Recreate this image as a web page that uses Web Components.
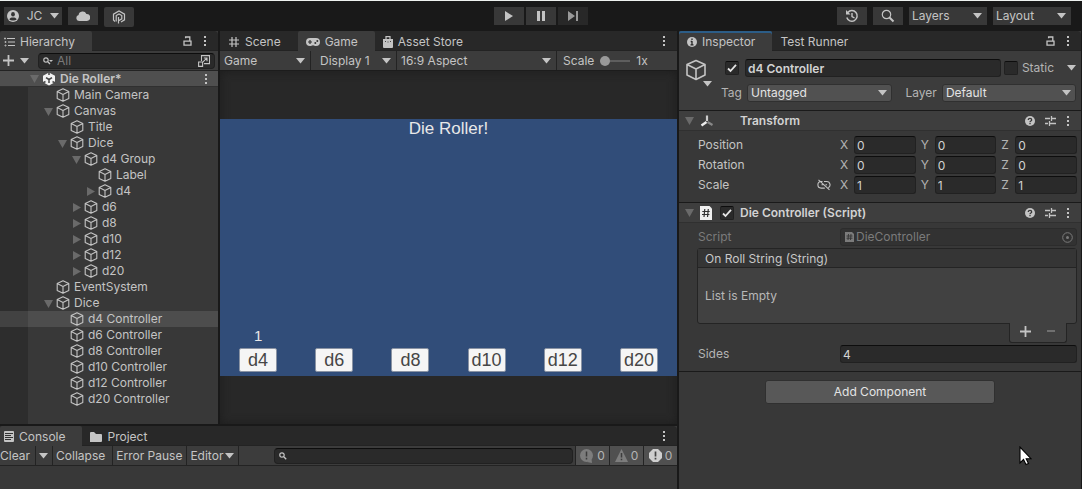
<!DOCTYPE html>
<html lang="en">
<head>
<meta charset="utf-8">
<title>Die Roller - Editor</title>
<style>
html, body { margin: 0; min-height: 100%; background: #191919; }
body { font: 12px/16px Inter, "Liberation Sans", sans-serif; color: #c4c4c4; }
</style>
</head>
<body>
<editor-app></editor-app>
<script>
const ICONS = {
  down: [9, 6, '<path d="M0 0h9L4.500 5.500z" fill="currentColor"/>'],
  foldOpen: [9, 9, '<path d="M0 1h9L4.500 9z" fill="currentColor"/>'],
  foldShut: [9, 9, '<path d="M1 0v9l8-4.500z" fill="currentColor"/>'],
  cube: [14, 14, '<path d="M7 .8 12.800 3.600v6.800L7 13.300 1.200 10.400V3.600zM1.200 3.600 7 6.400l5.800-2.800M7 6.400v6.800" fill="none" stroke="currentColor" stroke-width="1.100" stroke-linejoin="round"/>'],
  cubeBig: [22, 22, '<path d="M11 1.500 20 5.500v10.500L11 20.500 2 16V5.500zM2 5.500l9 4.500 9-4.500M11 10v10.500" fill="none" stroke="currentColor" stroke-width="1.600" stroke-linejoin="round"/>'],
  unity: [14, 14, '<path d="M7 .5 13 3.800v6.400L7 13.500 1 10.200V3.800z" fill="#f2f2f2"/><path d="M7 7.500V11M7 7.500 4 5.700M7 7.500l3-1.800" stroke="#444" stroke-width="1.500"/><path d="M7 0v3M.8 11 3.500 9.500M13.200 11 10.500 9.500" stroke="#4f4f4f" stroke-width="1.600"/>'],
  user: [12, 12, '<circle cx="6" cy="6" r="6" fill="currentColor"/><ellipse cx="6" cy="4.300" rx="1.900" ry="2.300" fill="#333"/><path d="M2.300 9.300C3 7.600 4.500 7.400 6 7.400s3 .2 3.700 1.900C8.700 10.400 7.400 10.600 6 10.600s-2.700-.2-3.700-1.300z" fill="#333"/>'],
  cloud: [14, 10, '<path d="M3 10a3 3 0 0 1-.4-5.900A4.100 4.100 0 0 1 10.400 3 3.500 3.500 0 0 1 11 10z" fill="currentColor"/>'],
  plastic: [14, 14, '<path d="M3 11.500 1.500 10V4.200L7 1l5.500 3.200v5.600L9 12" fill="none" stroke="currentColor" stroke-width="1.200"/><path d="M4.200 11.500V5.600L7 4l2.800 1.600v3.200L7 10.400M6.500 13.500V7" fill="none" stroke="currentColor" stroke-width="1.200"/>'],
  play: [10, 12, '<path d="M1 1v10l8-5z" fill="currentColor"/>'],
  pause: [10, 12, '<path d="M1 1h3v10H1zM6 1h3v10H6z" fill="currentColor"/>'],
  step: [12, 12, '<path d="M1 1v10l7-5zM9 1h2v10H9z" fill="currentColor"/>'],
  history: [14, 14, '<path d="M2.800 3.500A5.300 5.300 0 1 1 1.800 8.500" fill="none" stroke="currentColor" stroke-width="1.500"/><path d="M1 1v4.500h4.500z" fill="currentColor"/><path d="M7 4v3.500l2.500 1.500" fill="none" stroke="currentColor" stroke-width="1.400"/>'],
  search: [14, 14, '<circle cx="5.500" cy="5.500" r="4.200" fill="none" stroke="currentColor" stroke-width="1.200"/><path d="m8.500 8.500 4 4" stroke="currentColor" stroke-width="2"/>'],
  find: [8, 8, '<circle cx="3" cy="3" r="2.200" fill="none" stroke="currentColor" stroke-width="1.200"/><path d="m4.800 4.800 2.400 2.400" stroke="currentColor" stroke-width="1.400"/>'],
  findMenu: [10, 8, '<circle cx="3" cy="3" r="2.200" fill="none" stroke="currentColor" stroke-width="1.200"/><path d="m4.800 4.800 2.200 2.200" stroke="currentColor" stroke-width="1.300"/><path d="M6 3h4L8 5z" fill="currentColor"/>'],
  tree: [11, 10, '<path d="M3 1.500h8M4 5h7M4 8.500h7" stroke="currentColor" stroke-width="1.200"/><path d="M0 1.500h2M1 .5v2M1 4.500h1v1H1zM1 8h1v1H1z" stroke="currentColor" stroke-width=".8"/>'],
  lock: [9, 10, '<path d="M1 5.200h7v4H1zM2.600 2.200V1h4.200v4" fill="none" stroke="currentColor" stroke-width="1.300"/>'],
  more: [4, 12, '<path d="M1 1h2v2H1zM1 5h2v2H1zM1 9h2v2H1z" fill="currentColor"/>'],
  plus: [11, 11, '<path d="M5.500 0v11M0 5.500h11" stroke="currentColor" stroke-width="1.800"/>'],
  minus: [10, 10, '<path d="M1 5h8" stroke="currentColor" stroke-width="1.800"/>'],
  pick: [12, 12, '<path d="M3.500 6V.6h8v8H6M.6 7h4v4.400h-4zM5 6.800l3.500-3.500M5.800 3H9v3.200" fill="none" stroke="currentColor" stroke-width="1.100"/>'],
  grid: [12, 12, '<path d="M4 1v10M8 1v10M1 4h10M1 8h10" stroke="currentColor" stroke-width="1.200"/>'],
  pad: [14, 8, '<path d="M4 0h6a4 4 0 0 1 0 8c-1.200 0-1.800-.8-3-.8S5.200 8 4 8a4 4 0 0 1 0-8z" fill="currentColor"/><path d="M2 4h4M4 2v4" stroke="#333" stroke-width="1.200"/><circle cx="9.300" cy="5" r="1" fill="#333"/><circle cx="11.300" cy="3" r="1" fill="#333"/>'],
  bag: [10, 12, '<path d="M0 3h10v8a1 1 0 0 1-1 1H1a1 1 0 0 1-1-1z" fill="currentColor"/><path d="M3 3.500V.7h4v2.800" fill="none" stroke="currentColor" stroke-width="1.200"/><path d="M2 5.500h1M4.500 6h1M7 5.500h1" stroke="#444"/>'],
  info: [10, 10, '<circle cx="5" cy="5" r="5" fill="currentColor"/><path d="M5 1.500v1.600M5 4v4M3.700 4.500H5M3.500 7.800h3" stroke="#282828" stroke-width="1.300"/>'],
  console: [10, 11, '<rect width="10" height="11" rx="1" fill="currentColor"/><path d="M1 2.500h8M1 4.500h6M1 6.500h8M1 8.500h6" stroke="#333" stroke-width="1"/>'],
  folder: [12, 10, '<path d="M0 1q0-1 1-1h3l2 2h5q1 0 1 1v6q0 1-1 1H0z" fill="currentColor"/>'],
  axes: [14, 14, '<path d="M7 7V1.500" stroke="#ccc" stroke-width="2.200"/><path d="m6.500 8-5 3.500" stroke="#eee" stroke-width="2.400"/><path d="m7.500 8 5 3" stroke="#888" stroke-width="2.200"/>'],
  help: [10, 10, '<circle cx="5" cy="5" r="5" fill="currentColor"/><path d="M3.300 4c0-2.200 3.400-2 3.400-.1C6.700 5 5 5 5 6.200M5 7v1.300" fill="none" stroke="#383838" stroke-width="1.300"/>'],
  sliders: [11, 10, '<path d="M0 2.500h5M7 2.500h4M6.500 0v5M0 7.500h3M5 7.500h6M4.500 5v5" stroke="currentColor" stroke-width="1.300"/>'],
  check: [10, 10, '<path d="m1 5.500 2.500 2.500L9 1.800" fill="none" stroke="#e4e4e4" stroke-width="1.800"/>'],
  script: [12, 14, '<path d="M0 0h9.500L12 2.500V14H0z" fill="#f0f0f0"/><path d="M4.800 3 4 11M8.300 3l-.8 8M2.300 5.500h7.400M2 8.500h7.400" stroke="#333" stroke-width="1.200"/>'],
  scriptSmall: [9, 10, '<path d="M0 0h7l2 2v8H0z" fill="currentColor"/><path d="M3.500 2 3 8M6 2l-.5 6M1.500 4h6M1.500 6.200h6" stroke="#333" stroke-width=".9"/>'],
  unlink: [14, 12, '<path d="M5.500 2.500H4.200a3.300 3.300 0 0 0 0 6.600h3.600M7 2.500h2.800a3.300 3.300 0 0 1 1.500 6.200M4.500 5.800h1.800M8.500 5.800h1.500M1.500.8l11 10" fill="none" stroke="currentColor" stroke-width="1.100"/>'],
  target: [11, 11, '<circle cx="5.500" cy="5.500" r="4.800" fill="none" stroke="currentColor"/><circle cx="5.500" cy="5.500" r="1.500" fill="currentColor"/>'],
  bubble: [14, 14, '<circle cx="6.500" cy="6.500" r="6.500" fill="currentColor"/><path d="M7 13l5 1-.5-4z" fill="currentColor"/><path d="M6.500 2.500v5M6.500 8.800v1.700" stroke="#3c3c3c" stroke-width="1.500"/>'],
  warn: [13, 13, '<path d="M6.500 0 13 13H0z" fill="currentColor"/><path d="M6.500 4v4.500M6.500 9.800v1.500" stroke="#3c3c3c" stroke-width="1.500"/>'],
  error: [13, 13, '<path d="M4 0h5l4 4v5l-4 4H4L0 9V4z" fill="currentColor"/><path d="M6.500 2.500v5M6.500 8.800v1.700" stroke="#444" stroke-width="1.700"/>'],
  pointer: [13, 20, '<path d="M1 1v16l3.500-3.500L7 18.500l2.500-1-2.300-4.800H12z" fill="#fff" stroke="#000" stroke-width="1.100"/>']
};

const RESET = `
  :host { display: block; box-sizing: border-box; }
  *, *::before { box-sizing: border-box; }
  button { font: inherit; color: inherit; background: none; border: 0; padding: 0; margin: 0; display: flex; align-items: center; justify-content: center; }
  input, select { font: inherit; color: inherit; margin: 0; min-width: 0; outline: 0; }
`;

function define(name, view) {
  customElements.define(name, class extends HTMLElement {
    connectedCallback() {
      if (this.shadowRoot) return;
      const at = key => this.getAttribute(key) || '';
      this.attachShadow({ mode: 'open' }).innerHTML = `<style>${RESET}</style>` + view(at);
    }
  });
}

define('ui-icon', at => {
  const [w, h, body] = ICONS[at('name')];
  return `<style>:host { display: block; flex: none; line-height: 0; }</style>
    <svg width="${w}" height="${h}" viewBox="0 0 ${w} ${h}" aria-hidden="true">${body}</svg>`;
});

/* Dark toolbar push button. */
define('tool-button', at => `
  <style>
    button { height: 18px; width: 30px; background: #383838; gap: 8px; }
    :host([wide]) button { width: 58px; }
    :host([dim]) button { background: #282828; color: #999; }
    :host([tall]) button { height: 20px; border-radius: 2px; }
  </style>
  <button aria-label="${at('label')}"><slot></slot></button>`);

/* Drop-down; the arrow shares the select's grid cell. */
define('ui-select', at => `
  <style>
    :host { min-width: 0; }
    .row { display: flex; align-items: center; gap: 5px; height: 100%; }
    .box { display: grid; flex: 1; align-items: center; min-width: 0; height: 100%; }
    select, ui-icon { grid-area: 1 / 1; }
    ui-icon { justify-self: end; margin-right: 5px; pointer-events: none; }
    select { appearance: none; width: 100%; height: 18px; border: 0; border-radius: 0; padding: 0 16px 0 3px; background: #383838; }
    :host([flat]) select { background: transparent; height: 20px; padding-left: 4px; }
    :host([raised]) select { background: #515151; border: 1px solid #303030; border-radius: 3px; color: #e4e4e4; }
    label { color: #b4b4b4; }
  </style>
  <div class="row">
    ${at('label') ? `<label for="s">${at('label')}</label>` : ''}
    <div class="box"><select id="s" aria-label="${at('label') || at('name')}"><option>${at('value')}</option></select><ui-icon name="down"></ui-icon></div>
  </div>`);

define('ui-check', at => `
  <style>
    label { display: flex; align-items: center; gap: 4px; }
    .box { display: grid; place-items: center; }
    input, ui-icon { grid-area: 1 / 1; }
    input { appearance: none; width: 14px; height: 14px; background: #2a2a2a; border: 1px solid #212121; border-top-color: #0d0d0d; border-radius: 2px; }
    ui-icon { visibility: hidden; pointer-events: none; }
    input:checked + ui-icon { visibility: visible; }
    .name { color: #b4b4b4; }
  </style>
  <label><span class="box"><input type="checkbox" aria-label="${at('name')}" ${at('on') ? 'checked' : ''}><ui-icon name="check"></ui-icon></span>${at('label') ? `<span class="name">${at('label')}</span>` : ''}</label>`);

/* Text field with an optional leading label. */
define('ui-field', at => `
  <style>
    label { display: flex; align-items: center; gap: 6px; }
    label span { width: 8px; color: #b4b4b4; }
    :host([form]) label { display: grid; grid-template-columns: 142fr 237fr; gap: 0; }
    :host([form]) label span { width: auto; }
    input { flex: 1; width: 100%; height: 18px; padding: 0 2px; background: #2a2a2a; border: 1px solid #212121; border-top-color: #0d0d0d; border-radius: 3px; color: #d2d2d2; }
    :host([bold]) input { font-weight: 600; }
  </style>
  <label>${at('label') ? `<span>${at('label')}</span>` : ''}<input aria-label="${at('label') || at('name')}" value="${at('value')}"></label>`);

define('ui-tab', at => `
  <style>
    :host { flex: none; }
    button { height: 20px; padding: 1px 17px 0 8px; gap: 5px; }
    :host([active]) button { background: #3c3c3c; border-radius: 2px 2px 0 0; }
    :host([focused]) button { box-shadow: inset 0 2px #2c5d87; }
    :host([flush]) button { padding-left: 4px; }
  </style>
  <button role="tab" aria-selected="${at('active') === 'true'}">${at('icon') ? `<ui-icon name="${at('icon')}"></ui-icon>` : ''}<slot></slot></button>`);

define('tab-strip', at => `
  <style>
    :host { background: #282828; border-radius: 0 4px 0 0; border-bottom: 1px solid #232323; }
    .row { display: flex; height: 19px; align-items: flex-start; }
    .tabs { display: flex; flex: 1; min-width: 0; }
    .end { display: flex; align-items: center; height: 19px; gap: 11px; padding-right: 11px; }
    .end button { height: 18px; }
  </style>
  <div class="row"><div class="tabs" role="tablist"><slot></slot></div>
    <div class="end">${at('lock') ? '<button aria-label="Lock"><ui-icon name="lock"></ui-icon></button>' : ''}<button aria-label="Menu"><ui-icon name="more"></ui-icon></button></div></div>`);

define('tree-item', at => {
  const fold = at('fold');
  return `
  <style>
    .row { display: flex; height: 16px; align-items: center; }
    .gutter { width: 28px; height: 16px; flex: none; background: #2d2d2d; }
    .indent { width: ${Number(at('level')) * 14}px; flex: none; }
    .fold { width: 14px; flex: none; padding-left: 2px; color: #6a6a6a; }
    .name { margin-left: 4px; flex: 1; }
    :host([selected]) .row { background: #4d4d4d; }
    :host([selected]) .gutter { background: #424242; }
    :host([scene]) .row { background: #4f4f4f; border-bottom: 1px solid #303030; font-weight: 600; }
    :host([scene]) .gutter { background: none; }
    .more { margin-right: 10px; }
  </style>
  <div class="row" role="treeitem" aria-level="${Number(at('level')) + 1}">
    <span class="gutter"></span><span class="indent"></span>
    <span class="fold">${fold ? `<ui-icon name="${fold === 'open' ? 'foldOpen' : 'foldShut'}"></ui-icon>` : ''}</span>
    <ui-icon name="${at('icon') || 'cube'}"></ui-icon><span class="name"><slot></slot></span>
    ${at('icon') ? '<button class="more" aria-label="Scene menu"><ui-icon name="more"></ui-icon></button>' : ''}
  </div>`;
});

define('hierarchy-panel', () => {
  const rows = [
    [1, '', 'Main Camera'], [1, 'open', 'Canvas'], [2, '', 'Title'], [2, 'open', 'Dice'],
    [3, 'open', 'd4 Group'], [4, '', 'Label'], [4, 'shut', 'd4'],
    [3, 'shut', 'd6'], [3, 'shut', 'd8'], [3, 'shut', 'd10'], [3, 'shut', 'd12'], [3, 'shut', 'd20'],
    [1, '', 'EventSystem'], [1, 'open', 'Dice'],
    [2, '', 'd4 Controller', 'selected'], [2, '', 'd6 Controller'], [2, '', 'd8 Controller'],
    [2, '', 'd10 Controller'], [2, '', 'd12 Controller'], [2, '', 'd20 Controller']
  ];
  return `
  <style>
    :host { display: flex; flex-direction: column; background: #383838; min-width: 0; }
    .bar { display: flex; align-items: center; height: 20px; background: #3c3c3c; border-bottom: 1px solid #232323; padding: 0 3px; gap: 9px; }
    .add { gap: 6px; }
    .search { flex: 1; min-width: 0; display: flex; align-items: center; height: 16px; padding: 0 4px; gap: 4px; background: #2a2a2a; border: 1px solid #212121; border-top-color: #0d0d0d; border-radius: 4px; }
    input { flex: 1; width: 100%; height: 14px; padding: 0; background: none; border: 0; }
    input::placeholder { color: #7a7a7a; opacity: 1; }
    .tree { flex: 1; background: linear-gradient(90deg, #2d2d2d 28px, #383838 28px); }
  </style>
  <tab-strip lock="true"><ui-tab icon="tree" active="true" flush>Hierarchy</ui-tab></tab-strip>
  <div class="bar">
    <button class="add" aria-label="Create"><ui-icon name="plus"></ui-icon><ui-icon name="down"></ui-icon></button>
    <div class="search"><ui-icon name="findMenu"></ui-icon><input type="search" placeholder="All" aria-label="Search hierarchy"><button aria-label="Pick object"><ui-icon name="pick"></ui-icon></button></div>
  </div>
  <div class="tree" role="tree">
    <tree-item level="0" icon="unity" fold="open" scene>Die Roller*</tree-item>
    ${rows.map(([level, fold, name, state]) => `<tree-item level="${level}" fold="${fold}" ${state || ''}>${name}</tree-item>`).join('')}
  </div>`;
});

define('die-roll', at => `
  <style>
    :host { display: flex; flex-direction: column; align-items: center; gap: 2px; font: 17px/20px "Liberation Sans", sans-serif; }
    .value { height: 20px; color: #e8e8e8; font-size: 15px; }
    button { width: 38px; height: 24px; background: #f5f5f5; border: 1px solid #8a93a3; border-radius: 2px; color: #464646; font-size: 18px; }
  </style>
  <span class="value">${at('value')}</span><button><slot></slot></button>`);

define('game-panel', () => `
  <style>
    :host { display: flex; flex-direction: column; background: #282828; min-width: 0; }
    .bar { display: grid; grid-template-columns: 90fr 85fr 159fr 120fr; gap: 1px; height: 20px; background: #232323; border-bottom: 1px solid #1c1c1c; }
    .bar > * { background: #3c3c3c; height: 19px; }
    .inset { padding-left: 5px; }
    .scale { display: flex; align-items: center; gap: 6px; padding-left: 6px; }
    .scale label { display: flex; align-items: center; gap: 6px; }
    input { appearance: none; width: 30px; height: 12px; background: linear-gradient(#5e5e5e, #5e5e5e) center / 100% 2px no-repeat; }
    input::-webkit-slider-thumb { appearance: none; width: 10px; height: 10px; border-radius: 50%; background: #999; }
    .view { flex: 1; display: flex; flex-direction: column; justify-content: center; box-shadow: inset 0 0 10px #1d1d1d; }
    .stage { aspect-ratio: 16 / 9; display: flex; flex-direction: column; justify-content: space-between; background: #314d79; color: #e8e8e8; }
    h1 { margin: 0; text-align: center; font: 17px/20px "Liberation Sans", sans-serif; }
    .dice { display: grid; grid-template-columns: repeat(6, 1fr); padding-bottom: 4px; }
  </style>
  <tab-strip><ui-tab icon="grid">Scene</ui-tab><ui-tab icon="pad" active="true">Game</ui-tab><ui-tab icon="bag">Asset Store</ui-tab></tab-strip>
  <div class="bar">
    <ui-select flat name="View" value="Game"></ui-select>
    <ui-select flat class="inset" name="Display" value="Display 1"></ui-select>
    <ui-select flat name="Aspect" value="16:9 Aspect"></ui-select>
    <div class="scale"><label>Scale <input type="range" min="1" max="5" value="1"></label><span>1x</span></div>
  </div>
  <div class="view"><div class="stage">
    <h1>Die Roller!</h1>
    <div class="dice">
      <die-roll value="1">d4</die-roll><die-roll>d6</die-roll><die-roll>d8</die-roll>
      <die-roll>d10</die-roll><die-roll>d12</die-roll><die-roll>d20</die-roll>
    </div>
  </div></div>`);

define('console-panel', () => `
  <style>
    :host { display: flex; flex-direction: column; background: #383838; min-width: 0; }
    .bar { display: flex; align-items: stretch; height: 20px; background: #3c3c3c; border-bottom: 1px solid #232323; }
    .bar > button { padding: 0 4px 0 3px; border-right: 1px solid #232323; flex: none; }
    .bar > .clear { padding: 0 5px 0 0; }
    .bar > .arrow { padding: 0 4px 0 3px; }
    .bar > .wide { padding-right: 7px; }
    .bar > .menu { gap: 2px; }
    .search { flex: 1; min-width: 0; display: flex; align-items: center; height: 16px; margin: 2px 2px 0 35px; padding: 0 4px; background: #2a2a2a; border: 1px solid #212121; border-top-color: #0d0d0d; border-radius: 4px; gap: 4px; }
    input { flex: 1; height: 14px; padding: 0; background: none; border: 0; }
    .bar > .count { width: 34px; padding: 0; gap: 3px; background: #505050; border: 0; border-left: 1px solid #232323; color: #b4b4b4; }
    .count ui-icon { color: #7d7d7d; }
    .count .lit { color: #cfcfcf; }
  </style>
  <tab-strip><ui-tab icon="console" active="true" flush>Console</ui-tab><ui-tab icon="folder">Project</ui-tab></tab-strip>
  <div class="bar">
    <button class="clear">Clear</button><button class="arrow" aria-label="Clear options"><ui-icon name="down"></ui-icon></button>
    <button class="wide">Collapse</button><button>Error Pause</button>
    <button class="menu">Editor<ui-icon name="down"></ui-icon></button>
    <div class="search"><ui-icon name="find"></ui-icon><input type="search" aria-label="Search console"></div>
    <button class="count" aria-label="Messages"><ui-icon name="bubble"></ui-icon><span>0</span></button>
    <button class="count" aria-label="Warnings"><ui-icon name="warn"></ui-icon><span>0</span></button>
    <button class="count" aria-label="Errors"><ui-icon class="lit" name="error"></ui-icon><span>0</span></button>
  </div>`);

define('component-head', at => `
  <style>
    .row { display: grid; grid-template-columns: 9px 14px 14px 1fr auto; align-items: center; height: 21px; column-gap: 6px; padding: 0 11px 0 6px; background: #3e3e3e; border-top: 1px solid #1a1a1a; border-bottom: 1px solid #303030; }
    .fold { color: #6a6a6a; }
    h2 { margin: 0; font-size: 12px; line-height: 16px; font-weight: 600; color: #d2d2d2; }
    .tools { display: flex; gap: 10px; }
  </style>
  <div class="row">
    <ui-icon class="fold" name="foldOpen"></ui-icon><ui-icon name="${at('icon')}"></ui-icon>
    ${at('toggle') ? '<ui-check name="Enabled" on="true"></ui-check>' : '<span></span>'}
    <h2><slot></slot></h2>
    <div class="tools"><button aria-label="Help"><ui-icon name="help"></ui-icon></button><button aria-label="Presets"><ui-icon name="sliders"></ui-icon></button><button aria-label="Menu"><ui-icon name="more"></ui-icon></button></div>
  </div>`);

define('vector-row', at => `
  <style>
    .row { display: grid; grid-template-columns: 142fr 237fr; align-items: center; height: 18px; }
    .name { display: flex; align-items: center; justify-content: space-between; padding-right: 9px; }
    .fields { display: grid; grid-template-columns: repeat(3, 1fr); gap: 5px; }
  </style>
  <div class="row" role="group" aria-label="${at('name')}">
    <div class="name"><span>${at('name')}</span>${at('link') ? '<button aria-label="Link scale"><ui-icon name="unlink"></ui-icon></button>' : ''}</div>
    <div class="fields">${['X', 'Y', 'Z'].map(axis => `<ui-field label="${axis}" value="${at('value')}"></ui-field>`).join('')}</div>
  </div>`);

define('inspector-panel', () => `
  <style>
    :host { display: flex; flex-direction: column; background: #383838; min-width: 0; position: relative; }
    .object { display: grid; grid-template-columns: 22px 1fr; column-gap: 14px; padding: 8px 5px 8px 6px; background: #3c3c3c; min-height: 59px; }
    .thumb { display: flex; flex-direction: column; height: 28px; }
    .thumb ui-icon:last-child { align-self: flex-end; margin-right: -5px; }
    .lines { display: grid; gap: 6px; min-width: 0; }
    .name { display: flex; align-items: center; gap: 3px; padding-left: 4px; }
    .name ui-field { flex: 1; margin-left: 3px; }
    .name ui-icon { margin-left: 10px; }
    .kinds { display: grid; grid-template-columns: 1fr 1fr; gap: 14px; }
    .body { display: flex; flex-direction: column; gap: 2px; padding: 5px 4px 8px 19px; }
    .script { display: grid; grid-template-columns: 142fr 237fr; align-items: center; color: #7b7b7b; height: 18px; }
    .ref { display: flex; align-items: center; gap: 2px; height: 18px; padding: 0 3px 0 4px; border: 1px solid #2c2c2c; border-radius: 3px; background: #323232; }
    .ref span { flex: 1; }
    .list { margin-left: -1px; border: 1px solid #242424; border-radius: 3px; background: #414141; }
    .list h3 { margin: 0; padding: 0 7px; height: 19px; font-size: 12px; font-weight: 400; line-height: 20px; background: #353535; border-bottom: 1px solid #242424; color: #c8c8c8; }
    .list p { margin: 0; padding: 20px 7px; line-height: 16px; height: 55px; color: #b8b8b8; }
    .edit { align-self: flex-end; display: flex; align-items: center; justify-content: space-around; width: 58px; height: 20px; margin: -3px 10px 0 0; padding: 0 3px 3px; border: 1px solid #242424; border-top: 0; border-radius: 0 0 3px 3px; background: #414141; }
    .edit > :last-child { color: #777; }
    .foot { border-top: 1px solid #1a1a1a; padding-top: 8px; display: flex; justify-content: center; }
    .foot button { width: 57%; height: 24px; background: #585858; border: 1px solid #303030; border-radius: 3px; color: #e4e4e4; }
    .pointer { position: absolute; left: 340px; top: 415px; }
  </style>
  <tab-strip lock="true"><ui-tab icon="info" active="true" focused>Inspector</ui-tab><ui-tab>Test Runner</ui-tab></tab-strip>
  <section class="object">
    <div class="thumb"><ui-icon name="cubeBig"></ui-icon><ui-icon name="down"></ui-icon></div>
    <div class="lines">
      <div class="name"><ui-check name="Active" on="true"></ui-check><ui-field bold name="Object name" value="d4 Controller"></ui-field><ui-check label="Static" name="Static"></ui-check><ui-icon name="down"></ui-icon></div>
      <div class="kinds"><ui-select raised label="Tag" value="Untagged"></ui-select><ui-select raised label="Layer" value="Default"></ui-select></div>
    </div>
  </section>
  <component-head icon="axes">Transform</component-head>
  <div class="body">
    <vector-row name="Position" value="0"></vector-row>
    <vector-row name="Rotation" value="0"></vector-row>
    <vector-row name="Scale" value="1" link="true"></vector-row>
  </div>
  <component-head icon="script" toggle="true">Die Controller (Script)</component-head>
  <div class="body">
    <div class="script"><span>Script</span><div class="ref"><ui-icon name="scriptSmall"></ui-icon><span>DieController</span><ui-icon name="target"></ui-icon></div></div>
    <div class="list"><h3>On Roll String (String)</h3><p>List is Empty</p></div>
    <div class="edit"><button aria-label="Add"><ui-icon name="plus"></ui-icon></button><button aria-label="Remove"><ui-icon name="minus"></ui-icon></button></div>
    <ui-field form label="Sides" value="4"></ui-field>
  </div>
  <div class="foot"><button>Add Component</button></div>
  <ui-icon class="pointer" name="pointer"></ui-icon>`);

define('top-bar', () => `
  <style>
    :host { border-top: 1px solid #eef2f0; }
    .row { display: grid; grid-template-columns: 1fr auto 1fr; height: 30px; padding: 6px 11px 0; }
    .group { display: flex; gap: 6px; align-items: flex-start; }
    .group:first-child { margin-left: -7px; }
    .play { gap: 2px; }
    .end { justify-content: flex-end; }
    .end ui-select { width: 78px; }
  </style>
  <div class="row">
    <div class="group">
      <tool-button wide label="Account JC"><ui-icon name="user"></ui-icon><span>JC</span><ui-icon name="down"></ui-icon></tool-button>
      <tool-button label="Cloud"><ui-icon name="cloud"></ui-icon></tool-button>
      <tool-button tall label="Version control"><ui-icon name="plastic"></ui-icon></tool-button>
    </div>
    <div class="group play">
      <tool-button label="Play"><ui-icon name="play"></ui-icon></tool-button>
      <tool-button label="Pause"><ui-icon name="pause"></ui-icon></tool-button>
      <tool-button dim label="Step"><ui-icon name="step"></ui-icon></tool-button>
    </div>
    <div class="group end">
      <tool-button label="Undo history"><ui-icon name="history"></ui-icon></tool-button>
      <tool-button label="Search"><ui-icon name="search"></ui-icon></tool-button>
      <ui-select name="Layers" value="Layers"></ui-select>
      <ui-select name="Layout" value="Layout"></ui-select>
    </div>
  </div>`);

define('editor-app', () => `
  <style>
    :host { display: flex; flex-direction: column; min-height: 100vh; }
    main { flex: 1; display: grid; gap: 2px; padding-right: 1px;
      grid-template-columns: minmax(0, 218fr) minmax(0, 457fr) minmax(0, 402fr);
      grid-template-rows: 1fr 63px;
      grid-template-areas: "tree game inspector" "console console inspector"; }
    hierarchy-panel { grid-area: tree; }
    game-panel { grid-area: game; }
    console-panel { grid-area: console; }
    inspector-panel { grid-area: inspector; }
  </style>
  <top-bar></top-bar>
  <main><hierarchy-panel></hierarchy-panel><game-panel></game-panel><console-panel></console-panel><inspector-panel></inspector-panel></main>`);
</script>
</body>
</html>
